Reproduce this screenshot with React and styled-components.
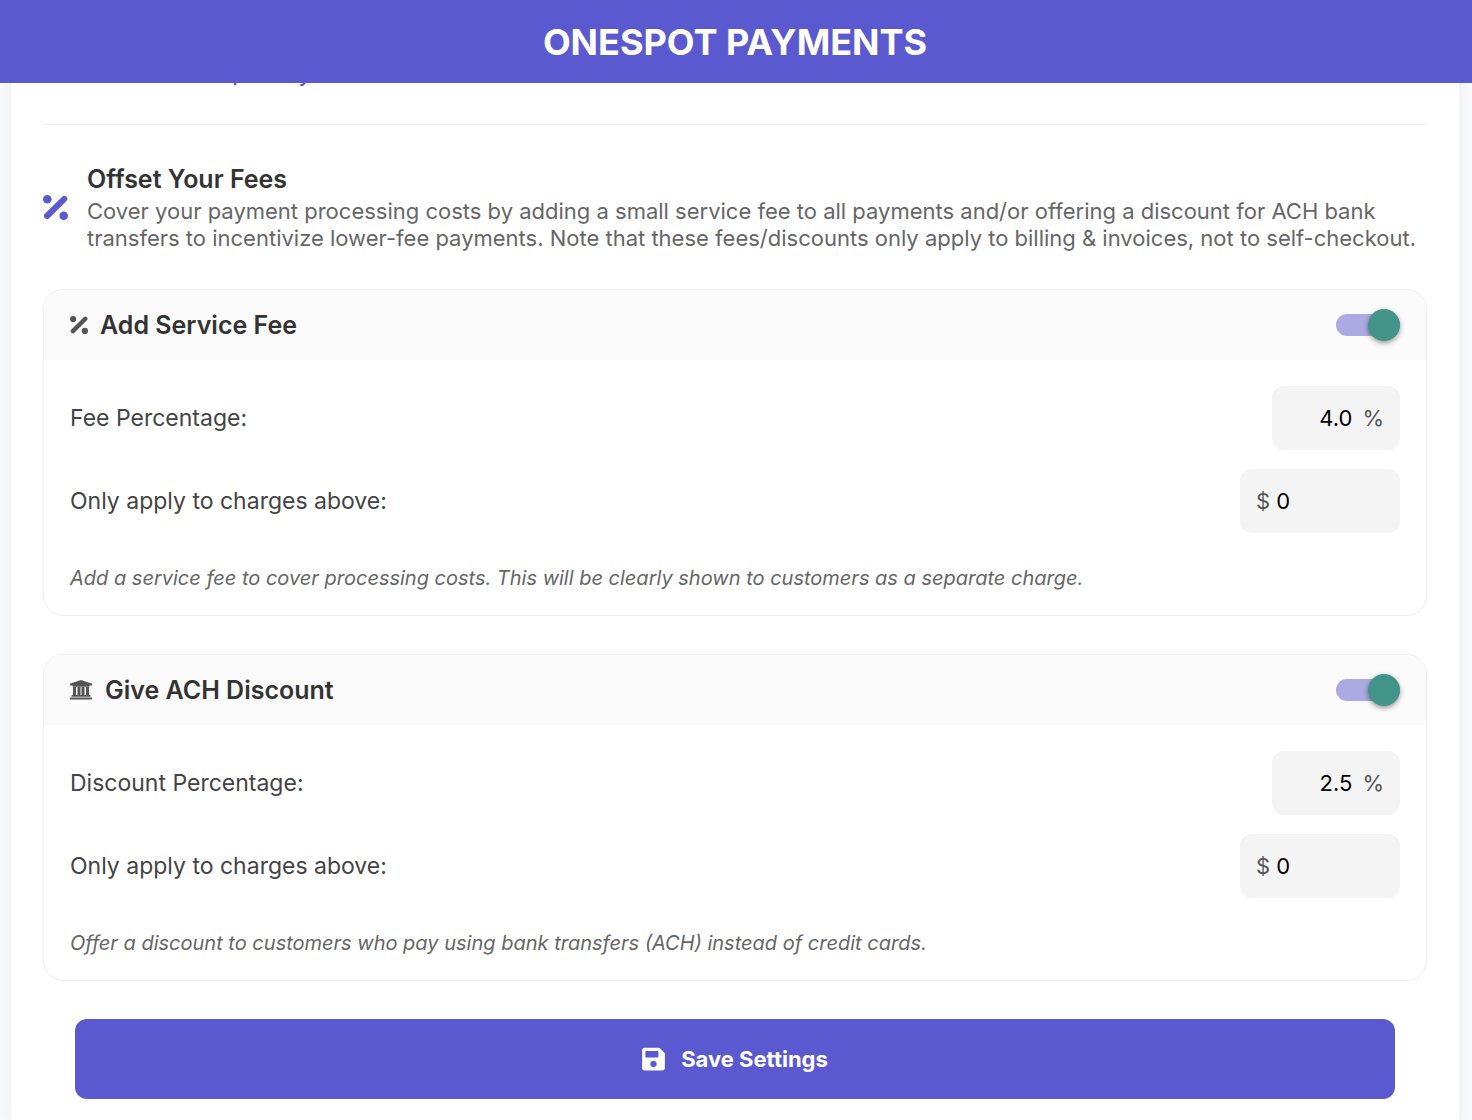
import { useState } from "react";
import styled, { createGlobalStyle } from "styled-components";
import { FaSave } from "react-icons/fa";

function PercentIcon({ size }) {
  return (
    <svg width={size} height={size} viewBox="0 0 25 25" aria-hidden="true">
      <circle cx="4.3" cy="4.3" r="4.3" fill="currentColor" />
      <circle cx="20.7" cy="20.7" r="4.3" fill="currentColor" />
      <path d="M4 21 21.3 3.9" stroke="currentColor" strokeWidth="6" strokeLinecap="round" />
    </svg>
  );
}

function BankIcon() {
  return (
    <svg width="23" height="20" viewBox="0 0 23 20" fill="currentColor" aria-hidden="true">
      <path d="M11 0 21.6 3.5q.4.2.4.6v.8q0 .6-.6.6H19.5v.7q0 .5-.5.5H3q-.5 0-.5-.5v-.7H.6Q0 5.500 0 4.900V4.100q0-.4.4-.6Z" />
      <path d="M3 7h3v8h1.500V7h3v8h1V7h3v8H16V7h3v8h.5q1 0 1 1v.8h-19V16q0-1 1-1H3Z" />
      <path d="M.6 17.500h20.800q.6 0 .6.6v.8q0 .6-.6.6H.6q-.6 0-.6-.6v-.8q0-.6.6-.6Z" />
    </svg>
  );
}

function FeeCard({ id, icon, title, label, percent, note }) {

  const [enabled, setEnabled] = useState(true);
  const [rate, setRate] = useState(percent);
  const [minimum, setMinimum] = useState("0");

  return (
    <Card>
      <CardHeader>
        <CardTitle>
          {icon}
          {title}
        </CardTitle>
        <Switch>
          <input
            type="checkbox"
            aria-label={title}
            checked={enabled}
            onChange={(e) => setEnabled(e.target.checked)}
          />
          <Thumb />
        </Switch>
      </CardHeader>
      <CardBody>
        <Row>
          <Label htmlFor={`${id}-rate`}>{label}</Label>
          <Field $width="128px" $gap="10px">
            <Input
              id={`${id}-rate`}
              $align="right"
              inputMode="decimal"
              value={rate}
              onChange={(e) => setRate(e.target.value)}
            />
            <Unit>%</Unit>
          </Field>
        </Row>
        <Row>
          <Label htmlFor={`${id}-minimum`}>Only apply to charges above:</Label>
          <Field $width="160px" $gap="6px">
            <Unit>$</Unit>
            <Input
              id={`${id}-minimum`}
              $align="left"
              inputMode="decimal"
              value={minimum}
              onChange={(e) => setMinimum(e.target.value)}
            />
          </Field>
        </Row>
        <Note>{note}</Note>
      </CardBody>
    </Card>
  );
}

function App() {
  return (
    <>
      <GlobalStyle />
      <TopBar>
        <h1>ONESPOT PAYMENTS</h1>
      </TopBar>
      <Page>
        <Panel>
          <LearnMore>
            <a href="#learn-more">Learn about OneSpot Pay</a>
          </LearnMore>
          <SectionHeader>
            <PercentIcon size={25} />
            <div>
              <h2>Offset Your Fees</h2>
              <p>
                Cover your payment processing costs by adding a small service fee to all payments and/or
                offering a discount for ACH bank transfers to incentivize lower-fee payments. Note that
                these fees/discounts only apply to billing &amp; invoices, not to self-checkout.
              </p>
            </div>
          </SectionHeader>
          <Cards>
            <FeeCard
              id="service-fee"
              icon={<PercentIcon size={18} />}
              title="Add Service Fee"
              label="Fee Percentage:"
              percent="4.0"
              note="Add a service fee to cover processing costs. This will be clearly shown to customers as a separate charge."
            />
            <FeeCard
              id="ach-discount"
              icon={<BankIcon />}
              title="Give ACH Discount"
              label="Discount Percentage:"
              percent="2.5"
              note="Offer a discount to customers who pay using bank transfers (ACH) instead of credit cards."
            />
          </Cards>
          <SaveButton type="button">
            <FaSave />
            Save Settings
          </SaveButton>
        </Panel>
      </Page>
    </>
  );
}

const GlobalStyle = createGlobalStyle`
  * {
    box-sizing: border-box;
  }
  body {
    margin: 0;
    background: #f7f9fb;
    font-family: Inter, "Liberation Sans", sans-serif;
  }
  h1, h2, h3, p {
    margin: 0;
  }
`

const TopBar = styled.header`
  position: sticky;
  top: 0;
  z-index: 2;
  padding: 18px 2px 17px 0;
  background: #5b59d0;
  color: white;
  text-align: center;

  h1{
    font-size: 36px;
    line-height: 48px;
    font-weight: 700;
  }
`

const Page = styled.main`
  padding: 0 13px 0 11px;
`

const Panel = styled.div`
  display: flex;
  flex-direction: column;
  margin-top: -23px;
  padding: 0 32px 21px;
  background: white;
  box-shadow: 0 0 16px rgba(0, 0, 0, 0.05);
`

const LearnMore = styled.div`
  padding-bottom: 37px;
  border-bottom: 1px solid #eeeeee;
  font-size: 22px;
  line-height: 27px;
  font-weight: 500;

  a{
    color: #5b59d0;
    text-decoration: none;
  }
`

const SectionHeader = styled.div`
  display: flex;
  align-items: center;
  gap: 19px;
  padding: 38px 0 37px;
  color: #5b59d0;

  svg{
    flex-shrink: 0;
  }

  h2{
    font-size: 25px;
    line-height: 32px;
    font-weight: 600;
    color: #333333;
  }

  p{
    margin-top: 3px;
    font-size: 22px;
    line-height: 27px;
    color: #666666;
  }
`

const Cards = styled.div`
  display: flex;
  flex-direction: column;
  gap: 38px;
`

const Card = styled.section`
  overflow: hidden;
  border: 1px solid #eeeeee;
  border-radius: 20px;
`

const CardHeader = styled.div`
  display: flex;
  align-items: center;
  justify-content: space-between;
  padding: 19px 26px;
  background: #fafafa;
`

const CardTitle = styled.h3`
  display: flex;
  align-items: center;
  gap: 12px;
  font-size: 25px;
  line-height: 32px;
  font-weight: 600;
  color: #333333;

  svg{
    color: #555555;
  }
`

const Switch = styled.label`
  position: relative;
  display: flex;
  align-items: center;
  width: 64px;
  height: 32px;
  cursor: pointer;

  input{
    appearance: none;
    width: 64px;
    height: 22px;
    margin: 0;
    border-radius: 11px;
    background: #aca9e3;
    cursor: pointer;
  }

  input:not(:checked){
    background: #cccccc;
  }

  input:not(:checked) + span{
    right: 32px;
    background: #fafafa;
  }
`

const Thumb = styled.span`
  position: absolute;
  top: 0;
  right: 0;
  width: 32px;
  height: 32px;
  border-radius: 50%;
  background: #439488;
  box-shadow: 0 2px 5px rgba(0, 0, 0, 0.4);
`

const CardBody = styled.div`
  display: flex;
  flex-direction: column;
  gap: 19px;
  padding: 26px 26px 24px;
`

const Row = styled.div`
  display: flex;
  align-items: center;
  justify-content: space-between;
`

const Label = styled.label`
  font-size: 23px;
  line-height: 30px;
  color: #444444;
`

const Field = styled.div`
  display: flex;
  align-items: center;
  gap: ${(props) => props.$gap};
  width: ${(props) => props.$width};
  height: 64px;
  padding: 0 16px;
  border-radius: 12px;
  background: #f4f4f4;
`

const Input = styled.input`
  flex: 1;
  min-width: 0;
  padding: 0;
  border: 0;
  outline: 0;
  background: transparent;
  color: black;
  font-family: inherit;
  font-size: 22px;
  text-align: ${(props) => props.$align};
`

const Unit = styled.span`
  font-size: 22px;
  color: #555555;
`

const Note = styled.p`
  padding-top: 13px;
  font-size: 20px;
  line-height: 26px;
  font-style: italic;
  color: #666666;
`

const SaveButton = styled.button`
  display: flex;
  align-items: center;
  justify-content: center;
  gap: 16px;
  height: 80px;
  margin: 38px 32px 0;
  border: 0;
  border-radius: 12px;
  background: #5b59d0;
  color: white;
  font-family: inherit;
  font-size: 22px;
  font-weight: 700;
  cursor: pointer;

  svg{
    width: 23px;
    height: 26px;
  }
`

export default App;
